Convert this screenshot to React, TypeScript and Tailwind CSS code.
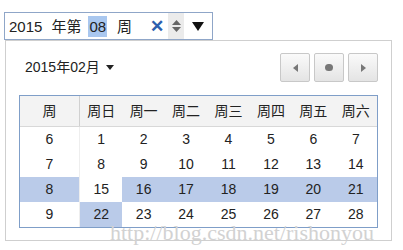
import React from "react";

const headers = ["周日", "周一", "周二", "周三", "周四", "周五", "周六"];

const weeks = [
  { week: 6, days: [1, 2, 3, 4, 5, 6, 7] },
  { week: 7, days: [8, 9, 10, 11, 12, 13, 14] },
  { week: 8, days: [15, 16, 17, 18, 19, 20, 21] },
  { week: 9, days: [22, 23, 24, 25, 26, 27, 28] },
];

const isMarked = (day: number) => (day >= 16 && day <= 21) || day === 22;

const NavButton: React.FC<{ children: React.ReactNode }> = ({ children }) => (
  <div className="w-[30px] h-[29px] flex items-center justify-center rounded-[2px] border border-[#c8c8c8] bg-gradient-to-b from-[#fafafa] to-[#e4e4e4]">
    {children}
  </div>
);

const App: React.FC = () => {
  return (
    <div
      className="relative w-[403px] h-[250px] bg-white pt-[12px] pl-[4px] text-[#222]"
      style={{ fontFamily: '"Liberation Sans", "Noto Sans CJK SC", sans-serif' }}
    >
      {/* input */}
      <div className="w-[209px] h-[28px] border border-[#8fa6c8] flex items-center pl-[4px] text-[15px] leading-none">
        <span>2015</span>
        <span className="ml-[9px]">年第</span>
        <span className="ml-[7px] bg-[#a9c7ef] px-[1px] py-[3px]">08</span>
        <span className="ml-[10px]">周</span>
        <span className="ml-[18px] text-[#2d5fae] font-bold text-[17px]">✕</span>
        <div className="ml-[4px] w-[16px] h-[26px] bg-[#ebebeb] flex flex-col items-center justify-center gap-[2px]">
          <svg width="9" height="5" viewBox="0 0 9 5">
            <polygon points="0,5 4.5,0 9,5" fill="#666" />
          </svg>
          <svg width="9" height="5" viewBox="0 0 9 5">
            <polygon points="0,0 4.5,5 9,0" fill="#666" />
          </svg>
        </div>
        <svg className="ml-[8px]" width="12" height="9" viewBox="0 0 12 9">
          <polygon points="0,0 12,0 6,9" fill="#111" />
        </svg>
      </div>

      {/* popup */}
      <div className="ml-[1px] w-[387px] h-[201px] border border-[#cfcfcf] px-[13px] pt-[12px] bg-white">
        <div className="flex items-center justify-between">
          <div className="flex items-center pl-[6px] text-[14px]">
            <span>2015年02月</span>
            <svg className="ml-[6px]" width="8" height="5" viewBox="0 0 8 5">
              <polygon points="0,0 8,0 4,5" fill="#222" />
            </svg>
          </div>
          <div className="flex gap-[4px]">
            <NavButton>
              <svg width="5" height="8" viewBox="0 0 5 8">
                <polygon points="5,0 0,4 5,8" fill="#777" />
              </svg>
            </NavButton>
            <NavButton>
              <div className="w-[8px] h-[7px] rounded-full bg-[#777]" />
            </NavButton>
            <NavButton>
              <svg width="5" height="8" viewBox="0 0 5 8">
                <polygon points="0,0 5,4 0,8" fill="#777" />
              </svg>
            </NavButton>
          </div>
        </div>

        <div className="mt-[13px] w-[359px] border border-[#7f9ec8] text-[14px]">
          <div className="grid grid-cols-[60px_repeat(7,1fr)] h-[31px] bg-[#f3f3f3] border-b border-[#d8d8d8]">
            <div className="flex items-center justify-center border-r border-[#d0d0d0]">周</div>
            {headers.map((h) => (
              <div key={h} className="flex items-center justify-center">
                {h}
              </div>
            ))}
          </div>
          {weeks.map((w) => (
            <div key={w.week} className="grid grid-cols-[60px_repeat(7,1fr)] h-[25px]">
              <div
                className={`flex items-center justify-center border-r border-[#eeeeee] ${
                  w.week === 8 ? "bg-[#bacbe9]" : ""
                }`}
              >
                {w.week}
              </div>
              {w.days.map((d) => (
                <div
                  key={d}
                  className={`flex items-center justify-center ${isMarked(d) ? "bg-[#bacbe9]" : ""}`}
                >
                  {d}
                </div>
              ))}
            </div>
          ))}
        </div>
      </div>

      {/* watermark */}
      <div
        className="absolute left-[110px] top-[222px] text-[22px] leading-none text-[#d2d2d2]"
        style={{ fontFamily: '"Liberation Serif", serif' }}
      >
        http://blog.csdn.net/rishonyou
      </div>
    </div>
  );
};

export default App;
